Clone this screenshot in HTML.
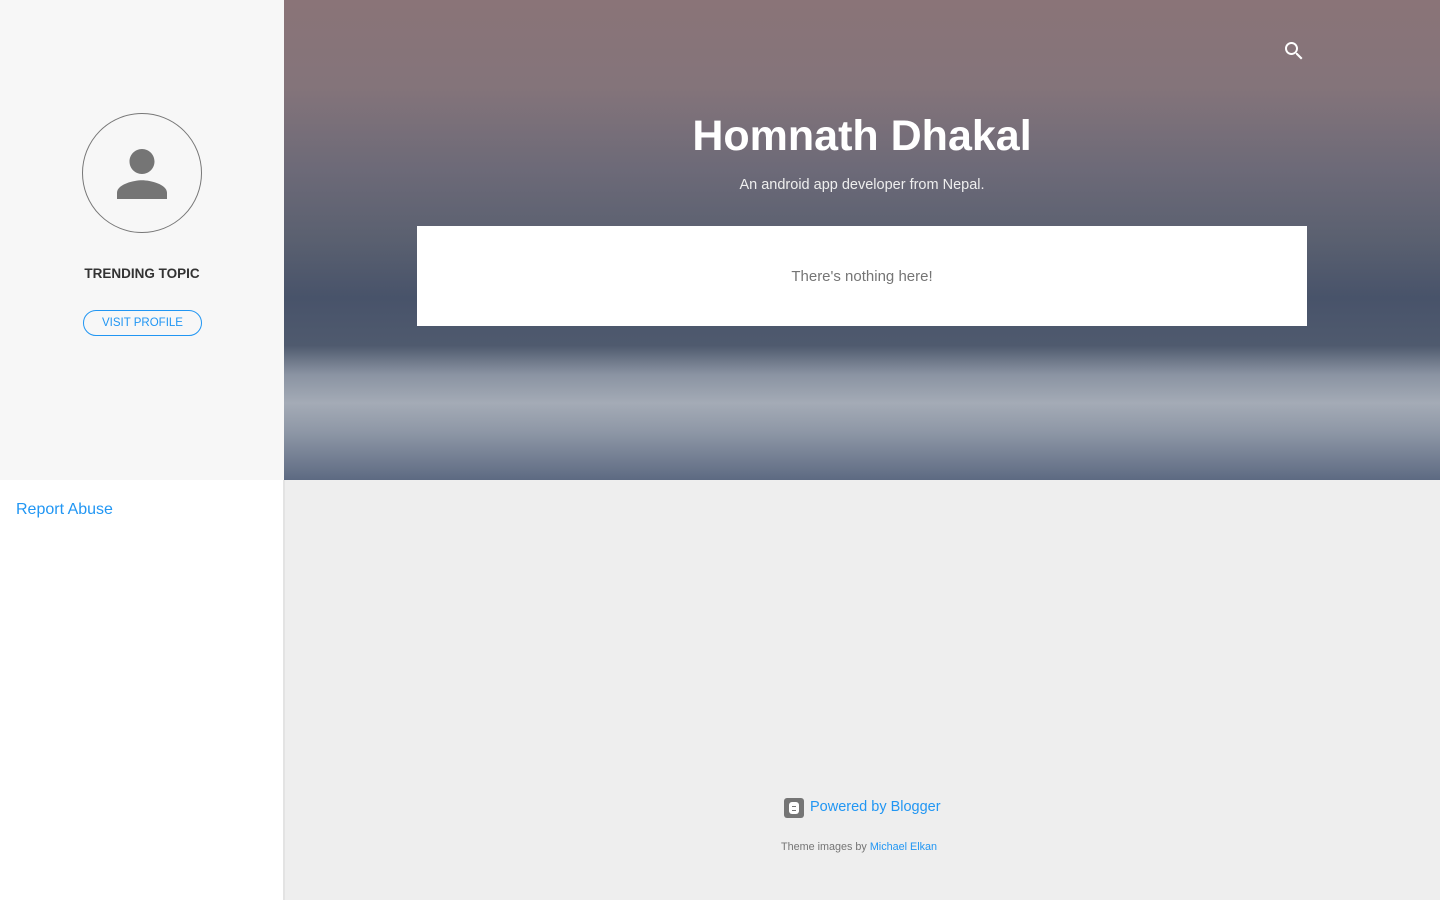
<!DOCTYPE html>
<html><head><meta charset="utf-8"><style>
*{margin:0;padding:0;box-sizing:border-box}
body{width:1440px;height:900px;overflow:hidden;background:#eee;font-family:"Liberation Sans",sans-serif;position:relative}
.side{position:absolute;left:0;top:0;width:285px;height:900px;background:#fff;border-right:2px solid #e3e3e3}
.sidetop{position:absolute;left:0;top:0;width:284px;height:480px;background:#f7f7f7}
.hero{position:absolute;left:284px;top:0;width:1156px;height:480px;
background:linear-gradient(180deg,#8a7478 0%,#84747a 18%,#6d6a78 35%,#5a6070 50%,#48536a 62%,#4f5a6e 72%,#8a93a2 78%,#a4abb6 84%,#8e97a6 90%,#5d6a82 100%)}
.card{position:absolute;left:417px;top:226px;width:890px;height:100px;background:#fff;text-align:center;color:#757575;font-size:15px;line-height:100px}
</style></head><body>
<div class="side"></div>
<div class="sidetop">
<div style="position:absolute;left:82px;top:113px;width:120px;height:120px;border:1px solid #777;border-radius:50%"></div>
<svg style="position:absolute;left:117px;top:149px" width="50" height="50" viewBox="4 4 16 16"><path fill="#757575" d="M12 12c2.2 0 4-1.8 4-4s-1.8-4-4-4-4 1.8-4 4 1.8 4 4 4zm0 2c-2.7 0-8 1.3-8 4v2h16v-2c0-2.7-5.3-4-8-4z"/></svg>
<div style="position:absolute;left:0;width:284px;top:266px;text-align:center;font-weight:bold;font-size:13.5px;color:#333">TRENDING TOPIC</div>
<div style="position:absolute;left:83px;top:310px;width:119px;height:26px;border:1px solid #2196f3;border-radius:13px;color:#2196f3;font-size:11.5px;text-align:center;line-height:24px">VISIT PROFILE</div>
</div>
<div style="position:absolute;left:16px;top:501px;color:#2196f3;font-size:16px">Report Abuse</div>
<div class="hero">
<svg style="position:absolute;left:998px;top:39px" width="24" height="24" viewBox="0 0 24 24"><path fill="#fff" d="M15.5 14h-.8l-.3-.3C15.4 12.6 16 11.1 16 9.5 16 5.9 13.1 3 9.5 3S3 5.9 3 9.5 5.9 16 9.5 16c1.6 0 3.1-.6 4.2-1.6l.3.3v.8l5 5 1.5-1.5-5-5zm-6 0C7 14 5 12 5 9.5S7 5 9.5 5 14 7 14 9.5 12 14 9.5 14z"/></svg>
<div style="position:absolute;left:0;width:1156px;top:112px;text-align:center;color:#fff;font-weight:bold;font-size:43px">Homnath Dhakal</div>
<div style="position:absolute;left:0;width:1156px;top:177px;text-align:center;color:#eee;font-size:14.5px">An android app developer from Nepal.</div>
</div>
<div class="card"><span style="position:relative;top:1px">There's nothing here!</span></div>
<div style="position:absolute;left:784px;top:798px;width:20px;height:20px;background:#757575;border-radius:3px"></div>
<div style="position:absolute;left:789px;top:802px;width:10px;height:12px;background:#fff;border-radius:3px"></div>
<div style="position:absolute;left:792px;top:806px;width:4px;height:1px;background:#757575"></div>
<div style="position:absolute;left:792px;top:810px;width:4px;height:1px;background:#757575"></div>
<div style="position:absolute;left:810px;top:799px;color:#2196f3;font-size:14.5px">Powered by Blogger</div>
<div style="position:absolute;left:781px;top:841px;color:#757575;font-size:10.8px">Theme images by <span style="color:#2196f3">Michael Elkan</span></div>
</body></html>
